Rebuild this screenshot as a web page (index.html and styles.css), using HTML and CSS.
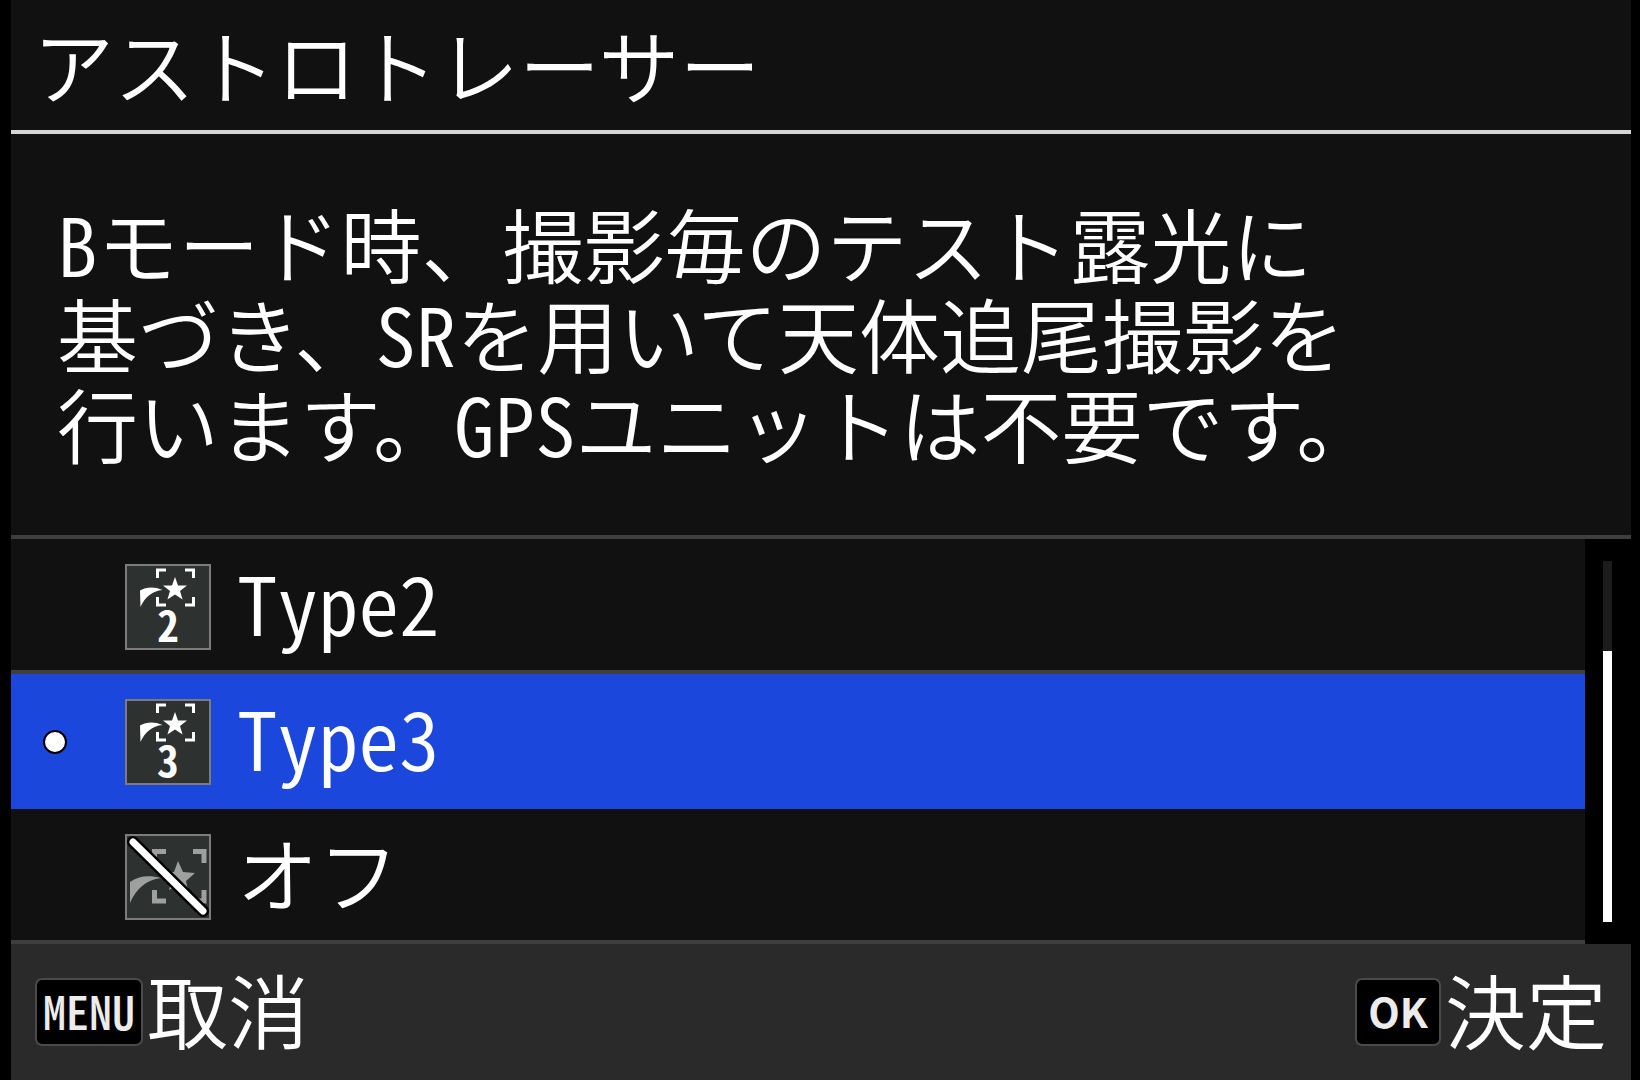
FILE: index.html
```html
<!DOCTYPE html>
<html lang="ja">
<head>
    <meta charset="UTF-8">
    <title>アストロトレーサー</title>
    <link rel="stylesheet" href="styles.css">
</head>
<body>

<form class="screen">
    <header class="title-bar">
        <h1>アストロトレーサー</h1>
    </header>

    <p class="description">
        Bモード時、撮影毎のテスト露光に<br>
        基づき、SRを用いて天体追尾撮影を<br>
        行います。GPSユニットは不要です。
    </p>

    <div class="list">
        <div class="options">
            <label class="option">
                <input type="radio" name="tracer" value="type2">
                <svg class="icon" viewBox="0 0 86 86" aria-hidden="true">
                    <rect class="plate" x="1" y="1" width="84" height="84"/>
                    <path class="frame" d="M32.500 14V6H41 M60 6h8.500V14 M68.500 33v8H60 M41 41h-8.500V33"/>
                    <path class="fill" d="M50 13l3 8.500h9l-7 5.500 2.600 8.500-7.600-5-7.600 5 2.600-8.500-7-5.500h9z"/>
                    <path class="fill" d="M15 26.500C21 23 29 22 37.500 26C27 27 20 33 15.500 43z"/>
                    <text x="43" y="78">2</text>
                </svg>
                <span>Type2</span>
            </label>
            <label class="option">
                <input type="radio" name="tracer" value="type3" checked>
                <svg class="icon" viewBox="0 0 86 86" aria-hidden="true">
                    <rect class="plate" x="1" y="1" width="84" height="84"/>
                    <path class="frame" d="M32.500 14V6H41 M60 6h8.500V14 M68.500 33v8H60 M41 41h-8.500V33"/>
                    <path class="fill" d="M50 13l3 8.500h9l-7 5.500 2.600 8.500-7.600-5-7.600 5 2.600-8.500-7-5.500h9z"/>
                    <path class="fill" d="M15 26.500C21 23 29 22 37.500 26C27 27 20 33 15.500 43z"/>
                    <text x="43" y="78">3</text>
                </svg>
                <span>Type3</span>
            </label>
            <label class="option">
                <input type="radio" name="tracer" value="off">
                <svg class="icon icon-off" viewBox="0 0 86 86" aria-hidden="true">
                    <rect class="plate" x="1" y="1" width="84" height="84"/>
                    <path class="frame" d="M29.500 30V17.500H41 M68 17.500h11V29 M79 56v11H68 M41 67H29.500V56"/>
                    <path class="fill" d="M53 27l5 11 12 1-9 8 2 9-10-5-9 5 2-9-9-8 12-1z"/>
                    <path class="fill" d="M5 48C13 42 24 41 36 44C21 46 11 55 5 69z"/>
                    <path class="slash-edge" d="M8 8L78 77"/>
                    <path class="slash" d="M8 8L78 77"/>
                </svg>
                <span>オフ</span>
            </label>
        </div>
        <div class="scrollbar"><div class="thumb"></div></div>
    </div>

    <footer class="footer">
        <button type="button"><kbd class="key key-narrow">MENU</kbd><span>取消</span></button>
        <button type="button"><kbd class="key">OK</kbd><span>決定</span></button>
    </footer>
</form>

</body>
</html>
```

FILE: styles.css
```css
:root {
    --bg: #111111;
    --bar: #2a2a2a;
    --line: #3f3f3f;
    --title-line: #d6d6d6;
    --selected: #1c47dd;
    --text: #ffffff;
}

* {
    box-sizing: border-box;
}

body {
    margin: 0;
    background: #000;
    color: var(--text);
    font-family: "Noto Sans CJK JP", sans-serif;
    font-size: 81px;
    font-weight: 350;
    line-height: 90px;
    /* half-width latin glyphs */
    font-feature-settings: "hwid";
}

.screen {
    display: flex;
    flex-direction: column;
    min-height: 100vh;
    margin: 0 9px 0 11px;
    background: var(--bg);
}

.title-bar {
    padding: 18px 22px 22px;
    border-bottom: 4px solid var(--title-line);
}

h1 {
    margin: 0;
    font-size: 81px;
    font-weight: inherit;
}

.description {
    margin: 0;
    padding: 63px 46px 68px;
    border-bottom: 4px solid var(--line);
}

.list {
    display: flex;
}

.options {
    flex: 1;
}

.option {
    display: flex;
    align-items: center;
    height: 135px;
    padding-left: 32px;
    box-shadow: inset 0 -4px var(--line);
}

.option:has(input:checked) {
    background: var(--selected);
    box-shadow: none;
}

.option span {
    padding-bottom: 12px;
}

.option input {
    appearance: none;
    width: 24px;
    height: 24px;
    margin: 0 58px 0 0;
    border-radius: 50%;
}

.option input:checked {
    background: var(--text);
    border: 2px solid #000;
}

.icon {
    width: 86px;
    height: 86px;
    margin-right: 26px;
    overflow: visible;
}

.plate {
    fill: #2d3130;
    stroke: #7c7c7c;
    stroke-width: 2;
}

.frame {
    fill: none;
    stroke: #fff;
    stroke-width: 3;
}

.fill {
    fill: #fff;
}

.icon text {
    fill: #fff;
    font-size: 43px;
    font-weight: 700;
    text-anchor: middle;
}

.icon-off .frame {
    stroke: #9da09f;
    stroke-width: 5;
}

.icon-off .fill {
    fill: #9da09f;
}

.slash,
.slash-edge {
    stroke: #fff;
    stroke-width: 7;
    stroke-linecap: round;
}

.slash-edge {
    stroke: #000;
    stroke-width: 12;
}

.scrollbar {
    width: 46px;
    padding: 22px 19px 22px 18px;
    background: linear-gradient(#1c1c1c, #1c1c1c) content-box, #000;
}

.thumb {
    height: 75%;
    margin-top: 90px;
    background: #fff;
}

.footer {
    flex: 1;
    display: flex;
    justify-content: space-between;
    align-items: center;
    padding: 0 24px;
    background: var(--bar);
}

.footer button {
    display: flex;
    align-items: center;
    gap: 4px;
    padding: 0;
    border: none;
    background: none;
    color: inherit;
    font: inherit;
    font-feature-settings: inherit;
    cursor: pointer;
}

.footer span {
    padding-bottom: 8px;
}

.key {
    height: 68px;
    padding: 0 11px;
    border: 2px solid #4a4a4a;
    border-radius: 7px;
    background: #000;
    color: #ececec;
    font-family: inherit;
    font-size: 41px;
    font-weight: 600;
    line-height: 60px;
    font-feature-settings: normal;
}

.key-narrow {
    padding: 0 6px;
    font-size: 46px;
    font-weight: 500;
    font-feature-settings: "hwid";
}
```
